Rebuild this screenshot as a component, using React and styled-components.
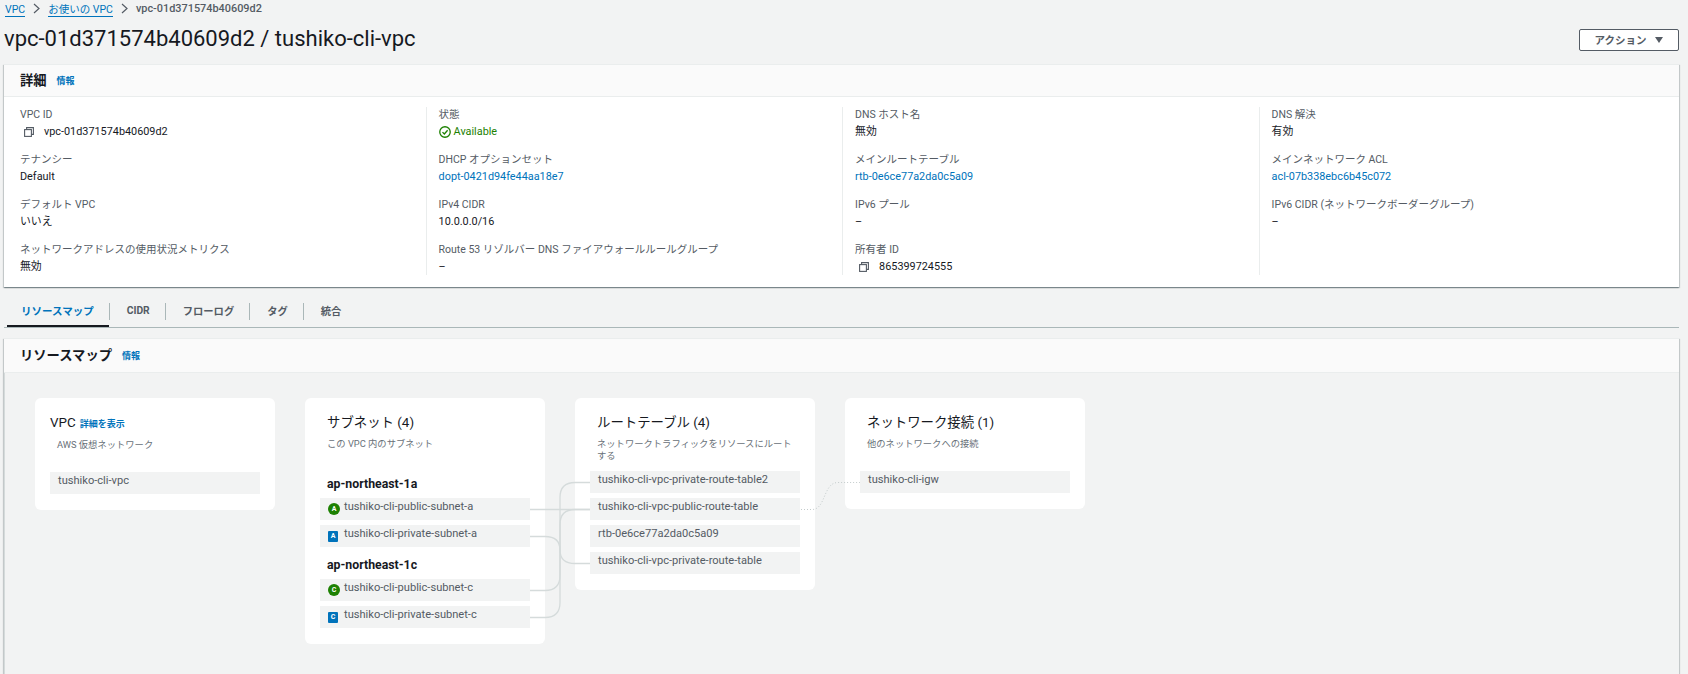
import { Fragment } from "react";
import styled, { createGlobalStyle } from "styled-components";

const GlobalStyle = createGlobalStyle`
  html, body {
    margin: 0;
    height: 674px;
    overflow: hidden;
    background: #f2f3f3;
    color: #16191f;
    font-family: Roboto, "Noto Sans CJK JP", sans-serif;
    font-size: 10.5px;
  }
`;

const Page = styled.div`
  padding: 0 9px 0 4px;
`;

const Crumbs = styled.nav`
  display: flex;
  align-items: center;
  height: 17px;
  padding-left: 1px;
  font-size: 10.5px;
`;

const CrumbLink = styled.a`
  color: #0073bb;
  line-height: 13px;
  border-bottom: 1px solid #0073bb;
  margin-top: 2px;
`;

const CrumbCurrent = styled.span`
  color: #545b64;
  font-size: 10.9px;
  font-weight: 500;
`;

const Chevron = styled.svg`
  width: 7px;
  height: 11px;
  margin: 0 8px;
  fill: none;
  stroke: #545b64;
  stroke-width: 1.2;
`;

const TitleRow = styled.header`
  display: flex;
  justify-content: space-between;
  align-items: center;
  margin-bottom: 3px;
`;

const Title = styled.h1`
  margin: 0;
  font-size: 22px;
  font-weight: 400;
  line-height: 44px;
`;

const ActionButton = styled.button`
  display: flex;
  align-items: center;
  justify-content: center;
  gap: 9px;
  width: 100px;
  height: 22px;
  margin-top: 2px;
  padding: 0 0 1px;
  background: #fff;
  border: 1px solid #545b64;
  border-radius: 2px;
  color: #545b64;
  font: 700 10.5px Roboto, "Noto Sans CJK JP", sans-serif;
`;

const Card = styled.section`
  background: #fff;
  border-top: 1px solid #eaeded;
  box-shadow: 0 1px 1px 0 rgba(0, 28, 36, 0.3), 1px 1px 1px 0 rgba(0, 28, 36, 0.15),
    -1px 1px 1px 0 rgba(0, 28, 36, 0.15);
`;

const CardHeader = styled.div`
  display: flex;
  align-items: center;
  gap: 10px;
  height: ${(p) => p.$height}px;
  box-sizing: border-box;
  padding-left: 16px;
  background: #fafafa;
  border-bottom: 1px solid #eaeded;
`;

const CardTitle = styled.h2`
  margin: -3px 0 0;
  font-size: 13.3px;
  font-weight: 700;
`;

const InfoLink = styled.a`
  color: #0073bb;
  font-size: 9px;
  font-weight: 700;
`;

const DetailGrid = styled.div`
  display: grid;
  grid-template-columns: 405.6px repeat(3, 416.5px);
  padding: 10px 0 12px 16px;
`;

const Column = styled.div`
  display: flex;
  flex-direction: column;
  gap: 14px;
  padding: 1px 0 1px;
  ${(p) => !p.$first && "border-left: 1px solid #eaeded; padding-left: 12px;"}
`;

const Field = styled.div`
  display: flex;
  flex-direction: column;
  gap: 3px;
`;

const Label = styled.div`
  color: #545b64;
  line-height: 14px;
`;

const Value = styled.div`
  display: flex;
  align-items: center;
  gap: ${(p) => p.$gap || 0}px;
  font-size: 10.85px;
  line-height: 14px;
  color: ${(p) => p.$color || "#16191f"};
`;

const CopySvg = styled.svg`
  width: 10px;
  height: 10px;
  margin-left: 4px;
  fill: none;
  stroke: #545b64;
  stroke-width: 1.1;
`;

const CheckSvg = styled.svg`
  width: 12px;
  height: 12px;
  fill: none;
  stroke: #1d8102;
  stroke-width: 1.2;
`;

const TabBar = styled.div`
  display: flex;
  align-items: center;
  height: 26px;
  margin-top: 14px;
  border-bottom: 1px solid #aab7b8;
`;

const Tab = styled.a`
  display: flex;
  align-items: center;
  align-self: stretch;
  box-sizing: border-box;
  padding: 0 15px 8px 17px;
  color: #545b64;
  font-size: 10.3px;
  font-weight: 700;
  ${(p) =>
    p.$active &&
    `margin-left: 3px;
     padding: 0 15px 6px 14px;
     font-size: 10.5px;
     color: #0073bb;
     border-bottom: 2px solid #16191f;`}
`;

const TabDivider = styled.span`
  width: 1px;
  height: 17px;
  margin-bottom: 5px;
  background: #aab7b8;
`;

const MapSection = styled(Card)`
  margin-top: 10px;
`;

const MapArea = styled.div`
  position: relative;
  display: flex;
  align-items: flex-start;
  gap: 30px;
  height: 276px;
  padding: 25px 0 0 30px;
  background: #f2f3f3;
  border-left: 1px solid #d5dbdb;
`;

const Connectors = styled.svg`
  position: absolute;
  left: 0;
  top: 0;
  width: 1100px;
  height: 300px;
  fill: none;
  pointer-events: none;
`;

const Node = styled.div`
  width: 240px;
  box-sizing: border-box;
  padding: 15px 15px 16px;
  background: #fff;
  border-radius: 6px;
`;

const NodeTitle = styled.div`
  display: flex;
  align-items: baseline;
  gap: 4px;
  padding-left: ${(p) => (p.$flush ? 0 : 7)}px;
  font-size: 13.4px;
  line-height: 20px;
`;

const NodeLink = styled.a`
  color: #0073bb;
  font-size: 9px;
  font-weight: 700;
`;

const NodeDesc = styled.div`
  min-height: 33px;
  margin-top: 5px;
  padding-left: 7px;
  color: #687078;
  font-size: 9.3px;
  line-height: 12px;
`;

const ItemGroup = styled.div`
  display: flex;
  flex-direction: column;
  gap: 5px;
`;

const AzName = styled.div`
  margin-bottom: -5px;
  padding-left: 7px;
  font-size: 12.3px;
  font-weight: 700;
  line-height: 27px;
`;

const Item = styled.div`
  display: flex;
  align-items: center;
  gap: 4px;
  height: 22px;
  box-sizing: border-box;
  padding: 0 8px;
  background: #f2f3f3;
  color: #545b64;
  font-size: 11.1px;
`;

const ItemText = styled.span`
  margin-top: -6px;
`;

const ZoneBadge = styled.span`
  display: flex;
  align-items: center;
  justify-content: center;
  flex: none;
  width: ${(p) => (p.$public ? 12 : 10)}px;
  height: ${(p) => (p.$public ? 12 : 11)}px;
  margin-right: ${(p) => (p.$public ? 0 : 2)}px;
  background: ${(p) => (p.$public ? "#1d8102" : "#0073bb")};
  border-radius: ${(p) => (p.$public ? "50%" : "1px")};
  color: #fff;
  font-size: 7px;
  font-weight: 700;
`;

const CopyIcon = () => (
  <CopySvg viewBox="0 0 10 10">
    <rect x="0.6" y="2.6" width="6.8" height="6.8" />
    <path d="M2.6 2.6V0.6H9.4V7.4H7.4" />
  </CopySvg>
);

const ChevronIcon = () => (
  <Chevron viewBox="0 0 7 11">
    <path d="M1 1L6 5.5L1 10" />
  </Chevron>
);

const columns = [
  [
    { label: "VPC ID", value: "vpc-01d371574b40609d2", copy: true },
    { label: "テナンシー", value: "Default" },
    { label: "デフォルト VPC", value: "いいえ" },
    { label: "ネットワークアドレスの使用状況メトリクス", value: "無効" },
  ],
  [
    { label: "状態", value: "Available", status: true },
    { label: "DHCP オプションセット", value: "dopt-0421d94fe44aa18e7", link: true },
    { label: "IPv4 CIDR", value: "10.0.0.0/16" },
    { label: "Route 53 リゾルバー DNS ファイアウォールルールグループ", value: "–" },
  ],
  [
    { label: "DNS ホスト名", value: "無効" },
    { label: "メインルートテーブル", value: "rtb-0e6ce77a2da0c5a09", link: true },
    { label: "IPv6 プール", value: "–" },
    { label: "所有者 ID", value: "865399724555", copy: true },
  ],
  [
    { label: "DNS 解決", value: "有効" },
    { label: "メインネットワーク ACL", value: "acl-07b338ebc6b45c072", link: true },
    { label: "IPv6 CIDR (ネットワークボーダーグループ)", value: "–" },
  ],
];

const tabs = ["CIDR", "フローログ", "タグ", "統合"];

const subnets = [
  {
    zone: "ap-northeast-1a",
    items: [
      { name: "tushiko-cli-public-subnet-a", letter: "A", isPublic: true },
      { name: "tushiko-cli-private-subnet-a", letter: "A" },
    ],
  },
  {
    zone: "ap-northeast-1c",
    items: [
      { name: "tushiko-cli-public-subnet-c", letter: "C", isPublic: true },
      { name: "tushiko-cli-private-subnet-c", letter: "C" },
    ],
  },
];

const routeTables = [
  "tushiko-cli-vpc-private-route-table2",
  "tushiko-cli-vpc-public-route-table",
  "rtb-0e6ce77a2da0c5a09",
  "tushiko-cli-vpc-private-route-table",
];

const FieldValue = ({ field }) => {
  if (field.status) {
    return (
      <Value $color="#1d8102" $gap={3}>
        <CheckSvg viewBox="0 0 11 11">
          <circle cx="5.5" cy="5.5" r="4.8" />
          <path d="M3.2 5.6L4.9 7.3L7.9 3.9" />
        </CheckSvg>
        {field.value}
      </Value>
    );
  }
  if (field.copy) {
    return (
      <Value $gap={10}>
        <CopyIcon />
        {field.value}
      </Value>
    );
  }
  return <Value $color={field.link ? "#0073bb" : undefined}>{field.value}</Value>;
};

export default function App() {
  return (
    <Page>
      <GlobalStyle />
      <Crumbs>
        <CrumbLink>VPC</CrumbLink>
        <ChevronIcon />
        <CrumbLink>お使いの VPC</CrumbLink>
        <ChevronIcon />
        <CrumbCurrent>vpc-01d371574b40609d2</CrumbCurrent>
      </Crumbs>

      <TitleRow>
        <Title>vpc-01d371574b40609d2 / tushiko-cli-vpc</Title>
        <ActionButton>
          アクション
          <svg width="8" height="6" viewBox="0 0 8 6">
            <path d="M0 0H8L4 6Z" fill="#545b64" />
          </svg>
        </ActionButton>
      </TitleRow>

      <Card>
        <CardHeader $height={32}>
          <CardTitle>詳細</CardTitle>
          <InfoLink>情報</InfoLink>
        </CardHeader>
        <DetailGrid>
          {columns.map((fields, i) => (
            <Column key={i} $first={i === 0}>
              {fields.map((field) => (
                <Field key={field.label}>
                  <Label>{field.label}</Label>
                  <FieldValue field={field} />
                </Field>
              ))}
            </Column>
          ))}
        </DetailGrid>
      </Card>

      <TabBar>
        <Tab $active>リソースマップ</Tab>
        {tabs.map((tab) => (
          <Fragment key={tab}>
            <TabDivider />
            <Tab>{tab}</Tab>
          </Fragment>
        ))}
      </TabBar>

      <MapSection>
        <CardHeader $height={34}>
          <CardTitle>リソースマップ</CardTitle>
          <InfoLink>情報</InfoLink>
        </CardHeader>
        <MapArea>
          <Node>
            <NodeTitle $flush>
              VPC <NodeLink>詳細を表示</NodeLink>
            </NodeTitle>
            <NodeDesc>AWS 仮想ネットワーク</NodeDesc>
            <Item>
              <ItemText>tushiko-cli-vpc</ItemText>
            </Item>
          </Node>

          <Node>
            <NodeTitle>サブネット (4)</NodeTitle>
            <NodeDesc>この VPC 内のサブネット</NodeDesc>
            <ItemGroup>
              {subnets.map((group) => (
                <ItemGroup key={group.zone}>
                  <AzName>{group.zone}</AzName>
                  {group.items.map((item) => (
                    <Item key={item.name}>
                      <ZoneBadge $public={item.isPublic}>{item.letter}</ZoneBadge>
                      <ItemText>{item.name}</ItemText>
                    </Item>
                  ))}
                </ItemGroup>
              ))}
            </ItemGroup>
          </Node>

          <Node>
            <NodeTitle>ルートテーブル (4)</NodeTitle>
            <NodeDesc>ネットワークトラフィックをリソースにルートする</NodeDesc>
            <ItemGroup>
              {routeTables.map((name) => (
                <Item key={name}>
                  <ItemText>{name}</ItemText>
                </Item>
              ))}
            </ItemGroup>
          </Node>

          <Node>
            <NodeTitle>ネットワーク接続 (1)</NodeTitle>
            <NodeDesc>他のネットワークへの接続</NodeDesc>
            <Item>
              <ItemText>tushiko-cli-igw</ItemText>
            </Item>
          </Node>

          <Connectors viewBox="5 373 1100 300">
            <g stroke="#d5dbdb" strokeWidth="1.3">
              <path d="M530 509.5H590" />
              <path d="M530 536.5H545Q560 536.5 560 550Q560 563.5 575 563.5H590" />
              <path d="M530 590.5H545Q560 590.5 560 575.5V524.5Q560 509.5 575 509.5H590" />
              <path d="M530 617.5H545Q560 617.5 560 602.5V497.5Q560 482.5 575 482.5H590" />
            </g>
            <path
              d="M801 509.5H812C826 509.5 823 482.5 838 482.5H860"
              stroke="#c4cccc"
              strokeWidth="1"
              strokeDasharray="1 2"
            />
          </Connectors>
        </MapArea>
      </MapSection>
    </Page>
  );
}
